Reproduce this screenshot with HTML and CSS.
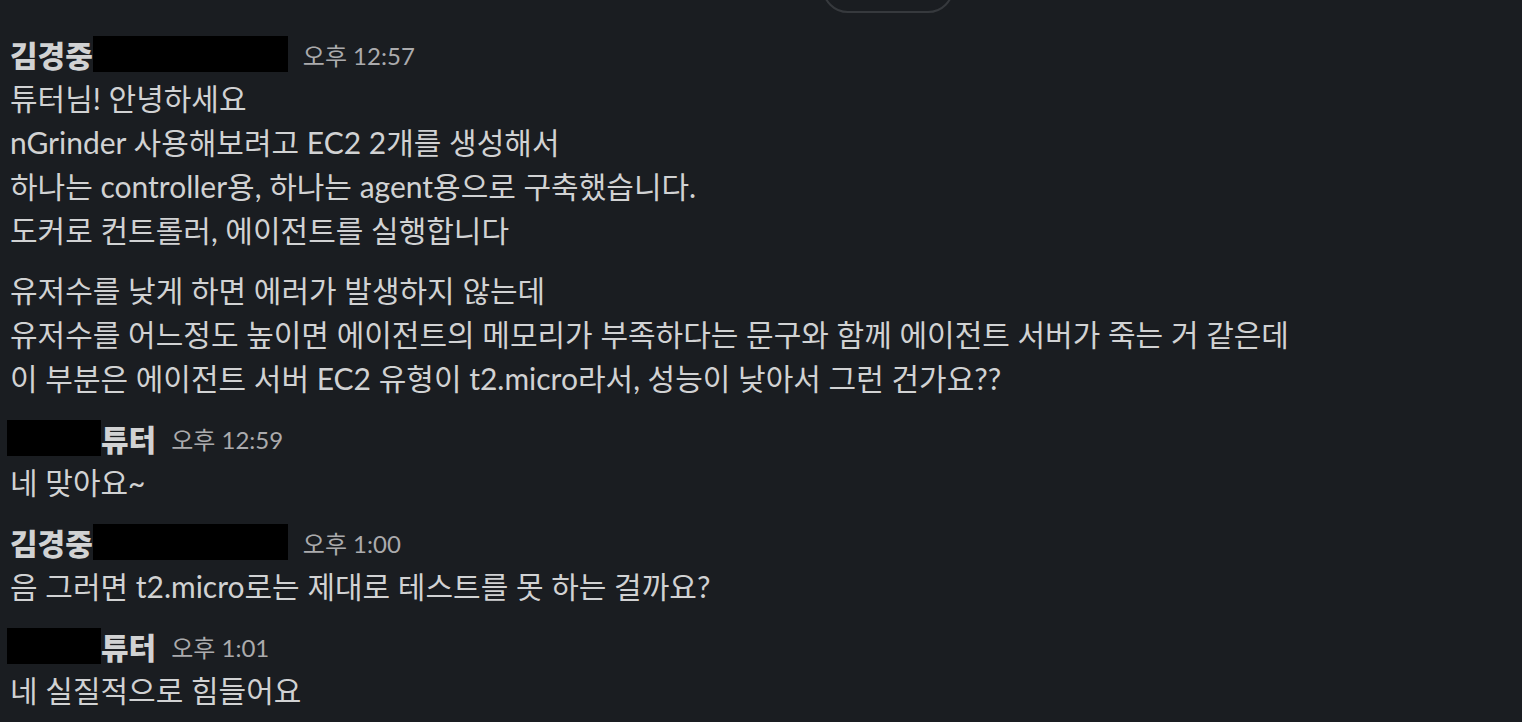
FILE: index.html
```html
<!DOCTYPE html>
<html lang="ko">
<head>
<meta charset="utf-8">
<link rel="stylesheet" href="styles.css">
</head>
<body>
<div class="pill"></div>
<main class="feed">
  <section class="msg">
    <div class="head"><span class="name">김경중</span><span class="redact wide"></span><span class="time">오후 12:57</span></div>
    <div class="body">
      <p>튜터님! 안녕하세요<br>nGrinder 사용해보려고 EC2 2개를 생성해서<br>하나는 controller용, 하나는 agent용으로 구축했습니다.<br>도커로 컨트롤러, 에이전트를 실행합니다</p>
      <p>유저수를 낮게 하면 에러가 발생하지 않는데<br>유저수를 어느정도 높이면 에이전트의 메모리가 부족하다는 문구와 함께 에이전트 서버가 죽는 거 같은데<br>이 부분은 에이전트 서버 EC2 유형이 t2.micro라서, 성능이 낮아서 그런 건가요??</p>
    </div>
  </section>
  <section class="msg">
    <div class="head"><span class="redact short"></span><span class="name">튜터</span><span class="time">오후 12:59</span></div>
    <div class="body"><p>네 맞아요~</p></div>
  </section>
  <section class="msg">
    <div class="head"><span class="name">김경중</span><span class="redact wide"></span><span class="time">오후 1:00</span></div>
    <div class="body"><p>음 그러면 t2.micro로는 제대로 테스트를 못 하는 걸까요?</p></div>
  </section>
  <section class="msg">
    <div class="head"><span class="redact short"></span><span class="name">튜터</span><span class="time">오후 1:01</span></div>
    <div class="body"><p>네 실질적으로 힘들어요</p></div>
  </section>
</main>
</body>
</html>
```

FILE: styles.css
```css
html, body {
  margin: 0;
  padding: 0;
  background: #1a1d21;
  width: 1522px;
  height: 722px;
  overflow: hidden;
}
body {
  position: relative;
  font-family: Lato, "Noto Sans CJK KR", sans-serif;
  color: #d1d2d3;
  font-size: 30px;
}
.pill {
  position: absolute;
  left: 822px;
  top: -40px;
  width: 128px;
  height: 49px;
  border: 2px solid #36393d;
  border-radius: 26px;
}
.feed {
  padding: 32px 0 0 10px;
  display: flex;
  flex-direction: column;
  gap: 16px;
}
.head {
  display: flex;
  align-items: center;
  height: 44px;
}
.name {
  font-weight: 900;
  font-size: 30px;
}
.time {
  font-size: 24px;
  color: #ababad;
  margin-left: 15px;
}
.redact {
  display: inline-block;
  background: #000;
  height: 36px;
}
.wide { width: 195px; }
.short { width: 94px; margin-left: -3px; }
.body p {
  margin: 0;
  line-height: 44px;
}
.body p + p { margin-top: 16px; }
```
